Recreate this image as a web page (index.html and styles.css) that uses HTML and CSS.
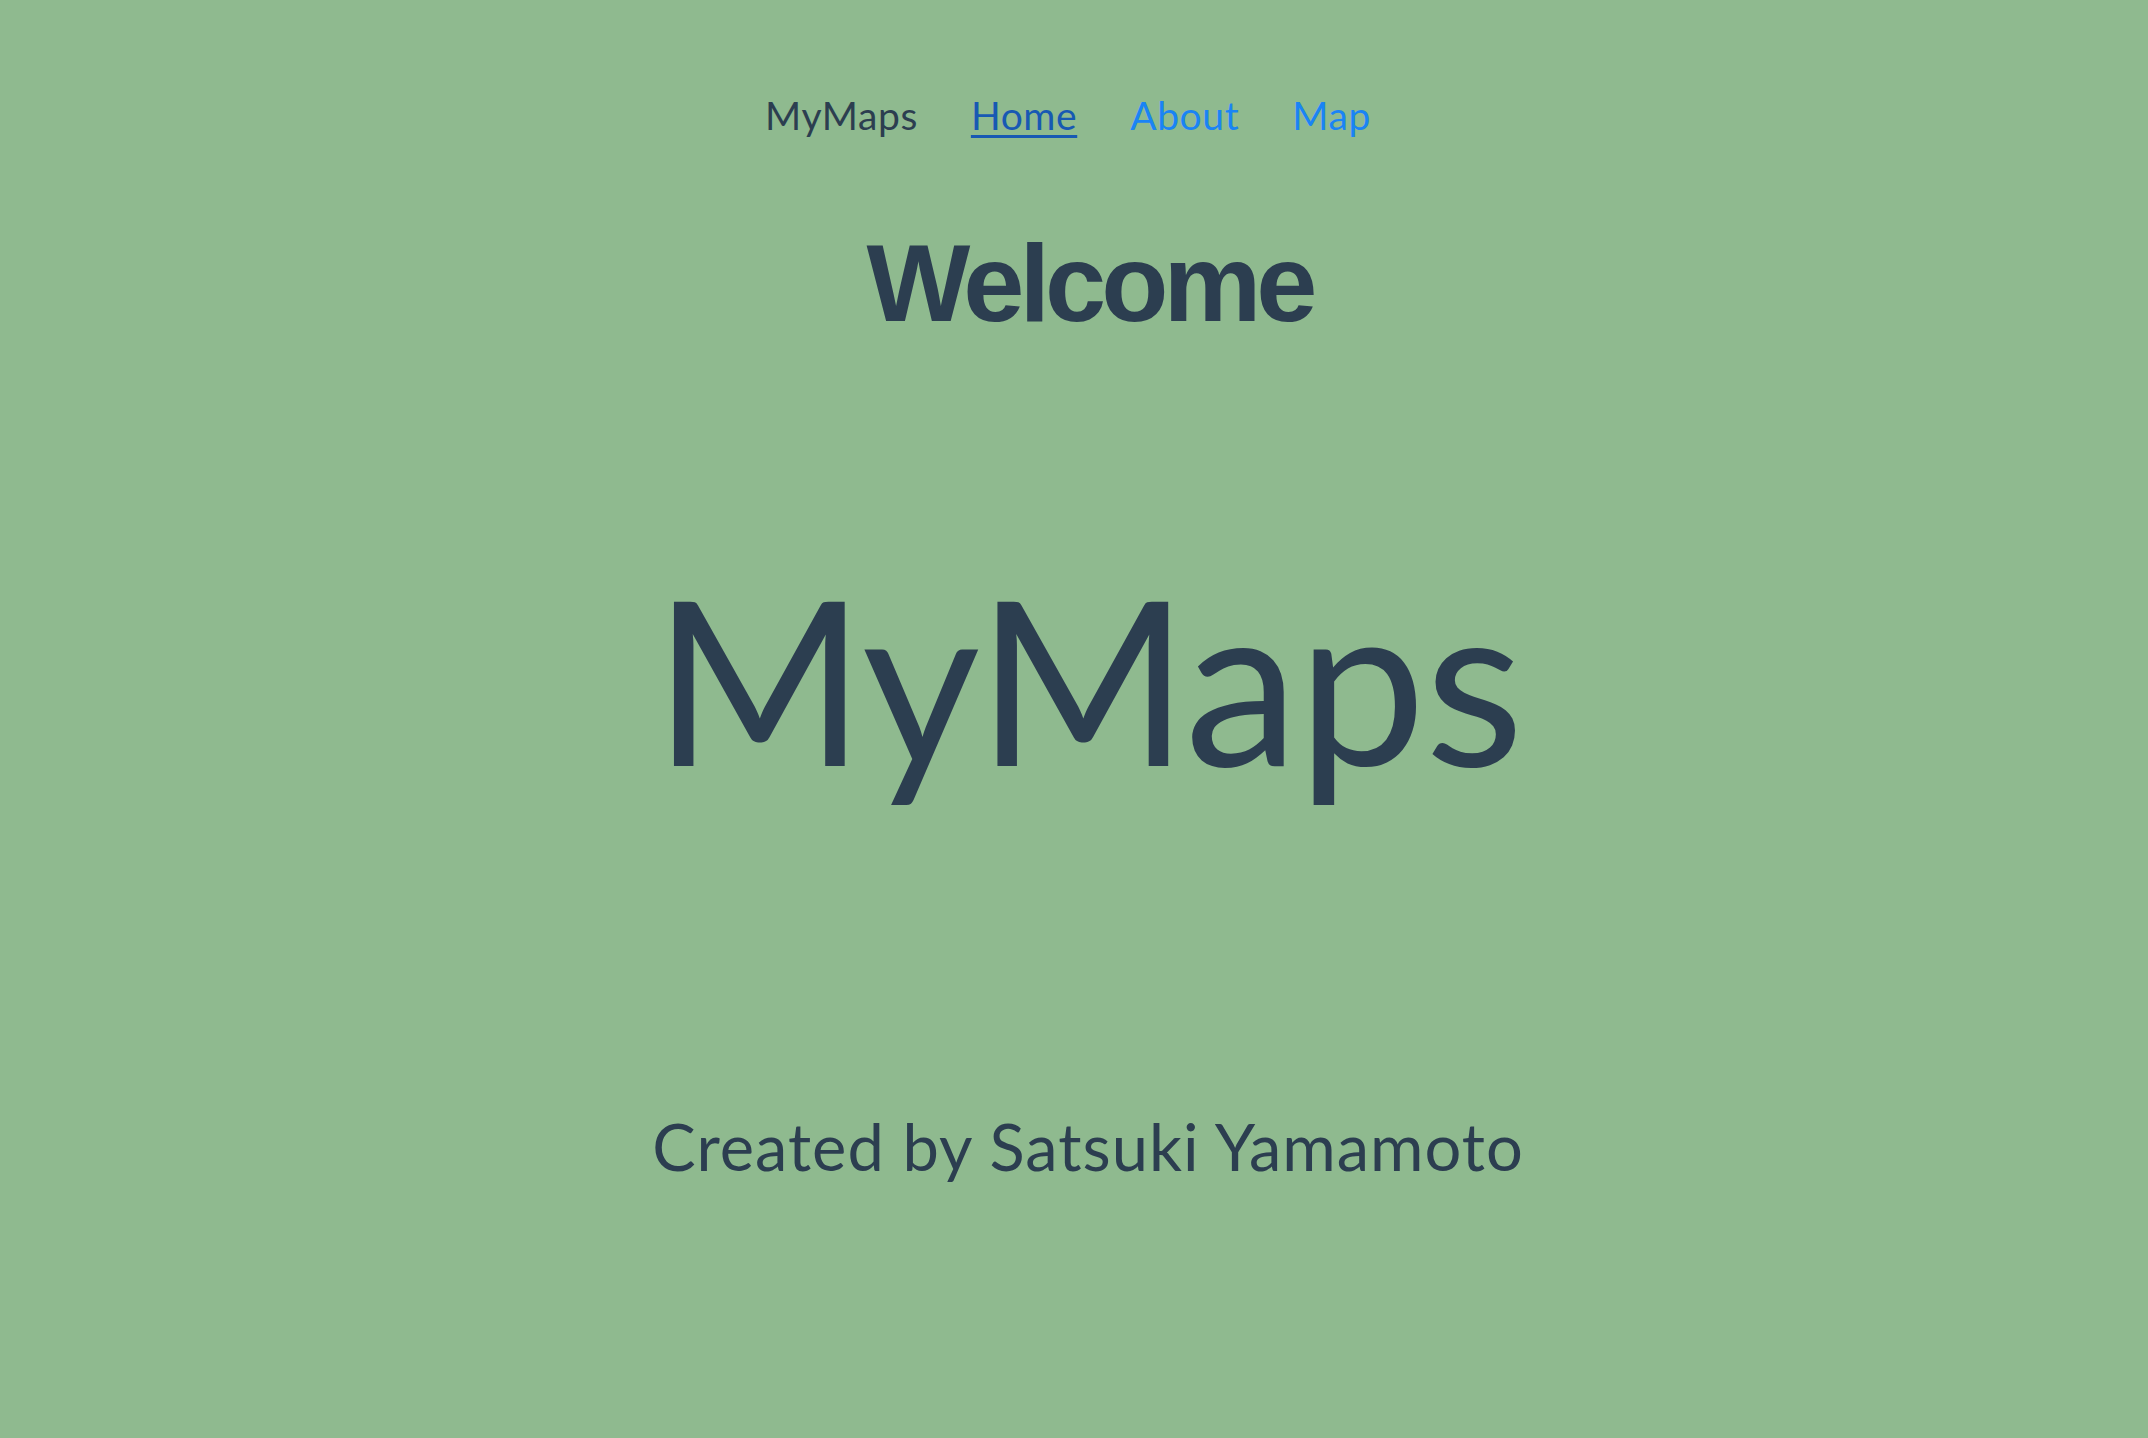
FILE: index.html
```html
<!DOCTYPE html>
<html lang="en">
<head>
<meta charset="utf-8">
<title>MyMaps</title>
<link rel="stylesheet" href="styles.css">
</head>
<body>
<div class="app">
  <nav class="nav">
    <span class="brand">MyMaps</span>
    <a class="link active" href="#">Home</a>
    <a class="link" href="#">About</a>
    <a class="link" href="#">Map</a>
  </nav>
  <h1 class="welcome">Welcome</h1>
  <section class="hero">
    <div class="hero-title">MyMaps</div>
    <p class="credit">Created by Satsuki Yamamoto</p>
  </section>
</div>
</body>
</html>
```

FILE: styles.css
```css
html, body {
  margin: 0;
  padding: 0;
  background: #8fba8f;
}
body {
  min-height: 1438px;
  font-family: "Lato", "Noto Sans", sans-serif;
  color: #2c3e50;
}
.app {
  display: flex;
  flex-direction: column;
}
.nav {
  display: flex;
  justify-content: center;
  gap: 53px;
  padding-top: 96px;
  padding-right: 12px;
  font-size: 39px;
  line-height: 1;
  letter-spacing: 0.6px;
}
.brand {
  color: #2c3e50;
}
.link {
  color: #1a84f5;
  text-decoration: none;
}
.link.active {
  color: #1759b3;
  text-decoration: underline;
  text-decoration-thickness: 3px;
  text-underline-offset: 5px;
}
.welcome {
  margin: 93px 0 0;
  padding-left: 31px;
  text-align: center;
  font-family: "Liberation Sans", Arial, sans-serif;
  font-weight: 700;
  font-size: 110px;
  line-height: 1;
  letter-spacing: -5px;
  color: #2c3e50;
}
.hero {
  display: flex;
  flex-direction: column;
  align-items: center;
  padding-left: 28px;
}
.hero-title {
  margin-top: 225px;
  font-size: 229px;
  line-height: 1;
  letter-spacing: -1px;
}
.credit {
  margin: 322px 0 0;
  font-size: 65px;
  line-height: 1;
  letter-spacing: 1px;
}
```
